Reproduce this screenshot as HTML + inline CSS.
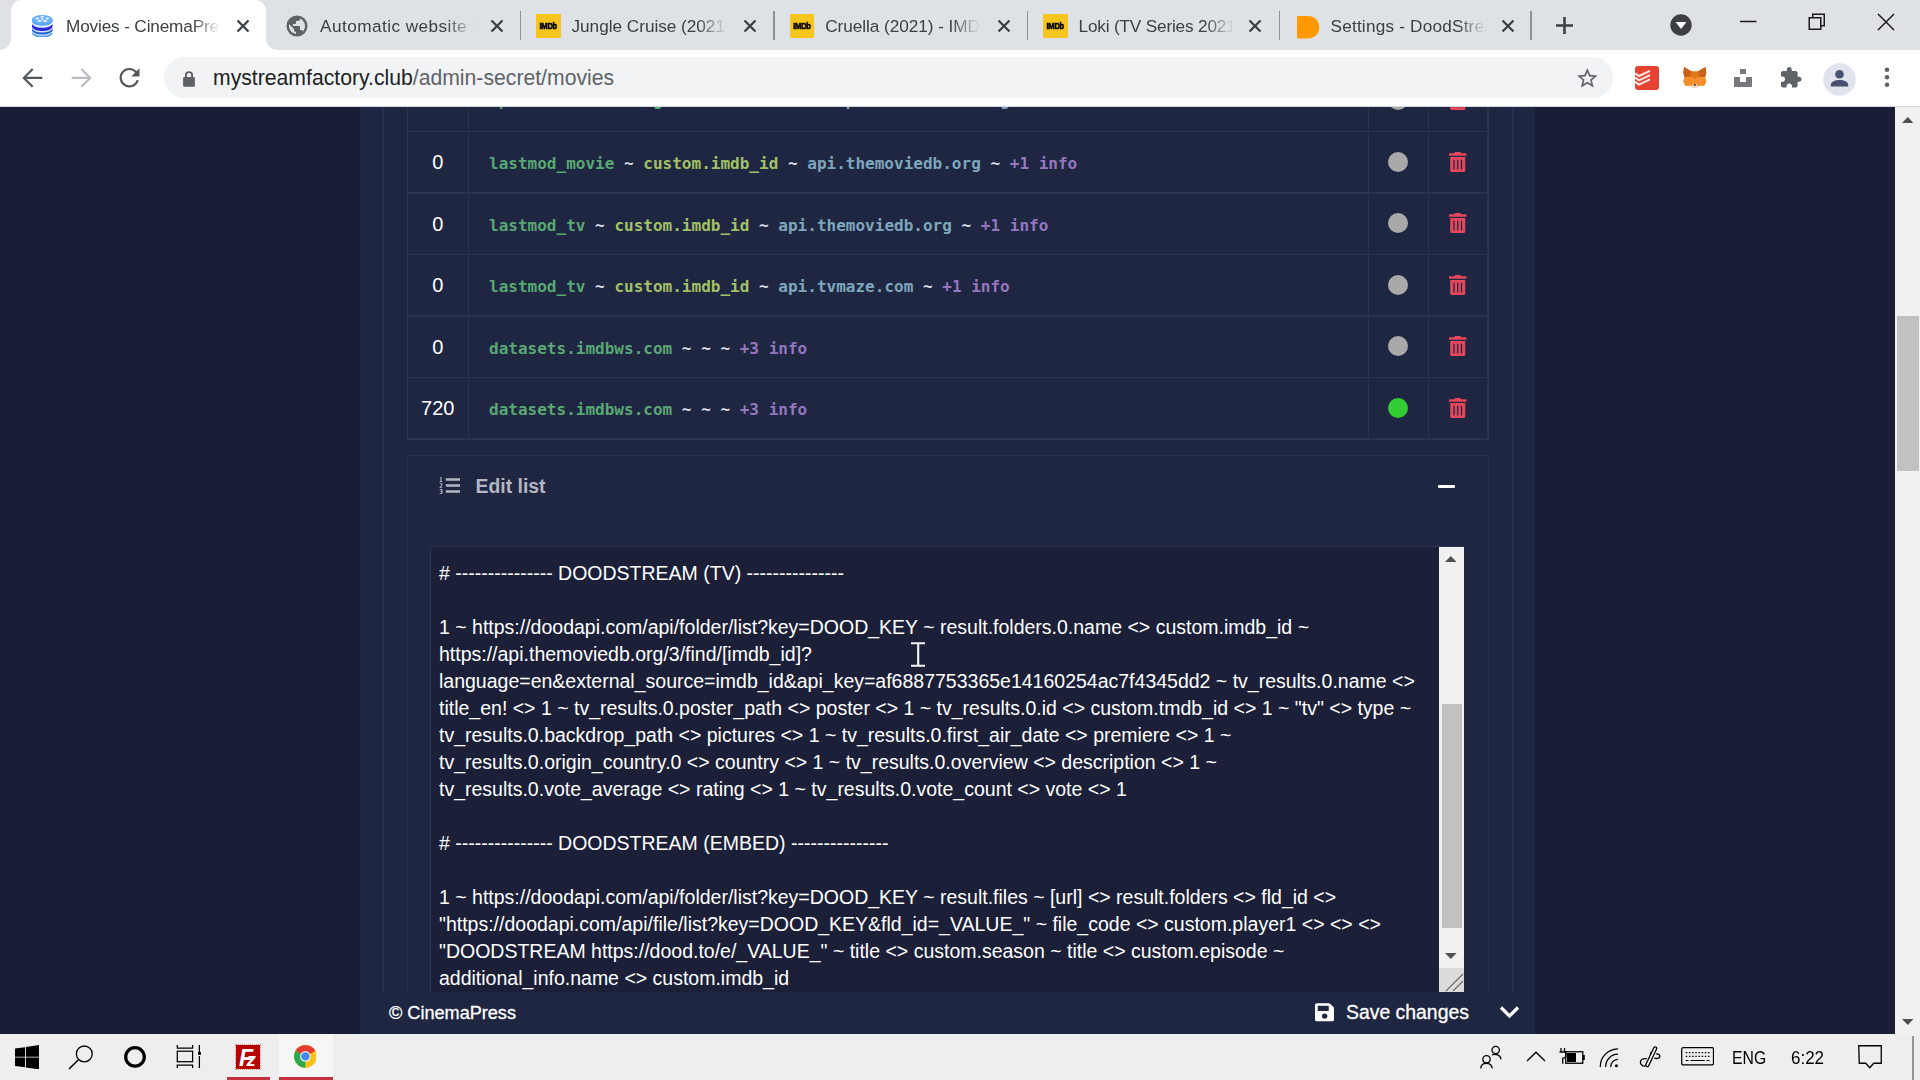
<!DOCTYPE html>
<html lang="en">
<head>
<meta charset="utf-8">
<title>Movies - CinemaPress</title>
<style>
*{box-sizing:border-box;margin:0;padding:0}
html,body{width:1920px;height:1080px;overflow:hidden;background:#1a1d36;font-family:"Liberation Sans",sans-serif}
.abs{position:absolute}
#tabstrip{position:absolute;left:0;top:0;width:1920px;height:50px;background:#dee1e6}
#toolbar{position:absolute;left:0;top:50px;width:1920px;height:56.5px;background:#fff;border-bottom:1.5px solid #d4d8e0}
#page{position:absolute;left:0;top:106.5px;width:1895px;height:927.5px;background:#1a1d36;overflow:hidden}
#vscroll{position:absolute;left:1895px;top:106.5px;width:25px;height:927.5px;background:#f1f1f1}
#taskbar{position:absolute;left:0;top:1034px;width:1920px;height:46px;background:#eeeeee}
/* page content: coordinates inside #page are relative to page (y offset 106.5) */
#panel{position:absolute;left:360px;top:0;width:1175px;height:928px;background:#1f2641}
.vl{position:absolute;top:0;width:1.5px;height:928px;background:#283050}
.hl{position:absolute;height:1.5px;background:#2b3353}

#tbl{position:absolute;left:406.5px;top:0;width:1082px;height:333px}
.tv{position:absolute;top:0;width:1.5px;height:333px;background:#2b3353}
.row{position:absolute;left:0;width:1082px;height:61.5px}
.row .num{position:absolute;left:1.5px;top:1.5px;width:59.5px;height:60px;line-height:60px;text-align:center;color:#fff;font-size:20px}
.row code{position:absolute;left:82.5px;top:2.5px;height:60px;line-height:61px;font-family:"DejaVu Sans Mono","Liberation Mono",monospace;font-size:16.02px;font-weight:bold;color:#dcdfe6;white-space:pre}
.row code b{font-weight:bold}
.g{color:#59a873}.y{color:#a2c166}.b{color:#7ea6bc}.p{color:#9476bf}
.dot{position:absolute;left:981.5px;top:21px;width:20px;height:20px;border-radius:50%;background:#a9a9a9}
.dot.on{background:#32cd32}
#card{position:absolute;left:406.5px;top:348px;width:1082px;height:700px;border:1.5px solid #293150;background:#1f2641}
#cardhead{position:absolute;left:68px;top:16px;font-size:19.4px;font-weight:bold;color:#b4b7c1;line-height:28px}
#minus{position:absolute;left:1030px;top:29px;width:17px;height:3.5px;background:#fff;border-radius:1px}
#ta{position:absolute;left:22.5px;top:90px;width:1034px;height:446px;background:#1c1f38;border-top:1.5px solid #2c3352;border-left:1.5px solid #2c3352;overflow:hidden}
#tatext{position:absolute;left:8px;top:13.5px;font-size:19.5px;line-height:27px;color:#fff;white-space:nowrap}
#tasb{position:absolute;left:1007.5px;top:0;width:25px;height:421px;background:#f1f1f1}
#tathumb{position:absolute;left:3px;top:157px;width:20px;height:224px;background:#c1c1c1}
#tacorner{position:absolute;left:1007.5px;top:421px;width:25px;height:24px;background:#dcdcdc}
#footer{position:absolute;left:360px;top:885px;width:1175px;height:43px;background:#1f2641;color:#fff}
#copy{position:absolute;left:29px;top:10px;font-size:18.1px;line-height:22px;-webkit-text-stroke:.3px #fff}
#save{position:absolute;left:986px;top:8.7px;font-size:19.4px;line-height:24px;-webkit-text-stroke:.3px #fff}

.atab{position:absolute;top:0;width:255.5px;height:50px;background:#fff;border-radius:11px 11px 0 0;margin-left:-4px}
.atab .fl,.atab .fr{position:absolute;bottom:0;width:11px;height:11px;background:radial-gradient(circle at 0 0,#dee1e6 10.5px,#fff 11px)}
.atab .fl{left:-11px}
.atab .fr{right:-11px;background:radial-gradient(circle at 100% 0,#dee1e6 10.5px,#fff 11px)}
.fav{position:absolute;top:13.500px;width:24px;height:24px}
.ttl{position:absolute;top:12.7px;margin-left:-1px;width:163px;height:28px;line-height:27px;font-size:17.200px;color:#3c4043;white-space:nowrap;overflow:hidden;-webkit-mask-image:linear-gradient(to right,#000 126px,transparent 155px);mask-image:linear-gradient(to right,#000 126px,transparent 155px)}
.tx{position:absolute;top:18.500px;width:14px;height:14px}
.tsep{position:absolute;top:11px;width:1.5px;height:29px;background:#8d9299}
.imdb{width:24.5px;height:24.5px;background:#f6c61f;border-radius:1px;position:relative}
.imdb span{position:absolute;left:0;top:0;width:24.500px;line-height:25px;text-align:center;font-size:7.6px;font-weight:bold;color:#000;letter-spacing:-0.3px;transform:scaleY(1.12);-webkit-text-stroke:.5px #000}
#omni{position:absolute;left:163.5px;top:7px;width:1449px;height:41px;border-radius:20.5px;background:#f1f3f4}
#url{position:absolute;left:213px;top:14px;font-size:21.200px;line-height:28px;white-space:nowrap}

.fz{color:#fff;font-weight:bold;font-style:italic;line-height:28px}
.tt{top:12px;font-size:17.500px;line-height:24px;color:#000}

.trash{position:absolute;left:1042.500px;top:21px;width:17.500px;height:20px}
#listic{position:absolute;left:31.500px;top:21px;width:23px;height:18px}
</style>
</head>
<body>
<div id="tabstrip"><div class="atab" style="left:14.5px"><i class="fl"></i><i class="fr"></i></div><div class="fav" style="left:30.5px"><svg width="20.5" height="22.5" viewBox="0 0 20.5 22.5" style="position:absolute;left:1.5px;top:1.3px"><g><ellipse cx="10.25" cy="18.3" rx="10.25" ry="4.2" fill="#4a9af0"/><ellipse cx="10.25" cy="16.500" rx="10.25" ry="4.200" fill="#d6e6fb"/><ellipse cx="10.25" cy="15.300" rx="10.25" ry="4.200" fill="#1c5fd0"/><rect x="0" y="13.800" width="20.5" height="1.500" fill="#1c5fd0"/><ellipse cx="10.25" cy="13.200" rx="10.25" ry="4.200" fill="#d6e6fb"/><ellipse cx="10.25" cy="11.800" rx="10.25" ry="4.200" fill="#2b28d8"/><rect x="0" y="9.300" width="20.5" height="2.500" fill="#2b28d8"/><ellipse cx="10.25" cy="8.600" rx="10.25" ry="4.200" fill="#e6f0fd"/><ellipse cx="10.25" cy="6.500" rx="10.25" ry="4.200" fill="#58a6f6"/><rect x="0" y="4.200" width="20.5" height="2.300" fill="#58a6f6"/><ellipse cx="10.25" cy="4.200" rx="10.25" ry="4.200" fill="#6db2f8"/><ellipse cx="10.25" cy="4.200" rx="1.300" ry=".7" fill="#fff"/><ellipse cx="5.300" cy="3.400" rx="1.900" ry="1" fill="#eaf3fe"/><ellipse cx="15.200" cy="3.400" rx="1.900" ry="1" fill="#eaf3fe"/><ellipse cx="7.500" cy="6" rx="1.900" ry="1" fill="#eaf3fe"/><ellipse cx="13" cy="6" rx="1.900" ry="1" fill="#eaf3fe"/><ellipse cx="10.25" cy="1.800" rx="1.900" ry=".9" fill="#eaf3fe"/></g></svg></div><div class="ttl" style="left:67.0px;letter-spacing:-0.15px">Movies - CinemaPress</div><svg class="tx" style="left:236px" viewBox="0 0 14 14"><path d="M1.5 1.5L12.5 12.5M12.5 1.5L1.5 12.5" stroke="#3c4043" stroke-width="2.3" fill="none"/></svg><div class="fav" style="left:284.5px"><svg width="24" height="24" viewBox="0 0 24 24"><circle cx="12" cy="12" r="10.5" fill="#5f6368"/><path d="M11 19.93c-3.95-.49-7-3.85-7-7.93 0-.62.08-1.21.21-1.79L9 15v1c0 1.1.9 2 2 2v1.93zm6.9-2.54c-.26-.81-1-1.39-1.9-1.39h-1v-3c0-.55-.45-1-1-1H8v-2h2c.55 0 1-.45 1-1V7h2c1.1 0 2-.9 2-2v-.41c2.93 1.19 5 4.06 5 7.41 0 2.08-.8 3.97-2.1 5.39z" fill="#dee1e6"/></svg></div><div class="ttl" style="left:321.0px;letter-spacing:0.45px">Automatic website for movies</div><svg class="tx" style="left:489.5px" viewBox="0 0 14 14"><path d="M1.5 1.5L12.5 12.5M12.5 1.5L1.5 12.5" stroke="#3c4043" stroke-width="2.3" fill="none"/></svg><i class="tsep" style="left:519.5px"></i><div class="fav" style="left:536px"><div class="imdb"><span>IMDb</span></div></div><div class="ttl" style="left:572.5px;letter-spacing:-0.02px">Jungle Cruise (2021) - IMDb</div><svg class="tx" style="left:743px" viewBox="0 0 14 14"><path d="M1.5 1.5L12.5 12.5M12.5 1.5L1.5 12.5" stroke="#3c4043" stroke-width="2.3" fill="none"/></svg><i class="tsep" style="left:773px"></i><div class="fav" style="left:789.75px"><div class="imdb"><span>IMDb</span></div></div><div class="ttl" style="left:826.25px;letter-spacing:-0.05px">Cruella (2021) - IMDb</div><svg class="tx" style="left:996.75px" viewBox="0 0 14 14"><path d="M1.5 1.5L12.5 12.5M12.5 1.5L1.5 12.5" stroke="#3c4043" stroke-width="2.3" fill="none"/></svg><i class="tsep" style="left:1026.500px"></i><div class="fav" style="left:1043px"><div class="imdb"><span>IMDb</span></div></div><div class="ttl" style="left:1079.5px;letter-spacing:-0.17px">Loki (TV Series 2021– ) - IMDb</div><svg class="tx" style="left:1248.25px" viewBox="0 0 14 14"><path d="M1.5 1.5L12.5 12.5M12.5 1.5L1.5 12.5" stroke="#3c4043" stroke-width="2.3" fill="none"/></svg><i class="tsep" style="left:1278.500px"></i><div class="fav" style="left:1295px"><svg width="23" height="23" viewBox="0 0 23 23" style="position:absolute;left:1.5px;top:2px"><path d="M.8 0h10.200c6.500 0 11.300 4.800 11.300 11.200s-4.800 11.200-11.300 11.200H.8c-.5 0-.8-.3-.8-.8V.8c0-.5.3-.8.8-.8z" fill="#ff9902"/></svg></div><div class="ttl" style="left:1331.5px;letter-spacing:0.2px">Settings - DoodStream</div><svg class="tx" style="left:1500.5px" viewBox="0 0 14 14"><path d="M1.5 1.5L12.5 12.5M12.5 1.5L1.5 12.5" stroke="#3c4043" stroke-width="2.3" fill="none"/></svg><i class="tsep" style="left:1530px"></i><svg class="abs" style="left:1555px;top:16px" width="19" height="19" viewBox="0 0 19 19"><path d="M9.5 1v17M1 9.500h17" stroke="#3c4043" stroke-width="2.6" fill="none"/></svg><svg class="abs" style="left:1670px;top:14px" width="22" height="22" viewBox="0 0 22 22"><circle cx="11" cy="11" r="10.700" fill="#3c4043"/><path d="M5.500 8h11l-5.500 7z" fill="#fff"/></svg><svg class="abs" style="left:1740px;top:20px" width="17" height="3" viewBox="0 0 17 3"><path d="M0 1.500h16.500" stroke="#1b1b1b" stroke-width="1.500"/></svg><svg class="abs" style="left:1808px;top:13px" width="18" height="18" viewBox="0 0 18 18"><path d="M1.250 4.750h11.500v11.500h-11.500z M4.750 4.750v-3.500h11.500v11.500h-3.500" stroke="#1b1b1b" stroke-width="1.500" fill="none"/></svg><svg class="abs" style="left:1877px;top:13px" width="18" height="18" viewBox="0 0 18 18"><path d="M1 1l16 16M17 1L1 17" stroke="#1b1b1b" stroke-width="1.500" fill="none"/></svg></div>
<div id="toolbar"><svg class="abs" style="left:20px;top:15px" width="26" height="26" viewBox="0 0 26 26"><path d="M22.300 12.900H4.500M12.700 4L3.800 12.900l8.900 8.900" stroke="#54575b" stroke-width="2.150" fill="none"/></svg><svg class="abs" style="left:68px;top:15px" width="26" height="26" viewBox="0 0 26 26"><path d="M3.700 12.900h17.800M13.300 4l8.900 8.900-8.900 8.900" stroke="#b9bcc0" stroke-width="2.150" fill="none"/></svg><svg class="abs" style="left:116px;top:15px" width="27" height="26" viewBox="0 0 27 26"><path d="M20.200 7.300A8.700 8.700 0 1 0 21.700 15.200" stroke="#54575b" stroke-width="2.200" fill="none"/><path d="M23.500 3.200v8.200h-8.200z" fill="#54575b"/></svg><div id="omni"></div><svg class="abs" style="left:182px;top:20.500px" width="14" height="16" viewBox="0 0 14 16"><path d="M3.900 6.500V4.200a3.100 3.100 0 0 1 6.200 0V6.500" stroke="#5f6368" stroke-width="1.900" fill="none"/><rect x="1.100" y="5.900" width="11.800" height="9.900" rx="1.300" fill="#5f6368"/></svg><div id="url"><span style="color:#202124">mystreamfactory.club</span><span style="color:#5f6368">/admin-secret/movies</span></div><svg class="abs" style="left:1575px;top:15.500px" width="24.600" height="24.600" viewBox="0 0 24 24"><path d="M22 9.240l-7.190-.62L12 2 9.190 8.630 2 9.240l5.460 4.730L5.820 21 12 17.270 18.180 21l-1.630-7.030L22 9.240zM12 15.400l-3.760 2.270 1-4.280-3.320-2.880 4.380-.38L12 6.100l1.710 4.040 4.380.38-3.320 2.880 1 4.280L12 15.400z" fill="#5f6368"/></svg><svg class="abs" style="left:1635px;top:16px" width="24" height="24" viewBox="0 0 24 24"><rect width="24" height="24" rx="3" fill="#e44332"/><path d="M0 7.200l4 2.800 11-5.200M0 11.500l4 2.800 11-5.200M0 15.800l4 2.800 11-5.200" stroke="#fbeae6" stroke-width="2" fill="none"/></svg><svg class="abs" style="left:1683px;top:17px" width="23.600" height="21.500" viewBox="0 0 24 22"><path d="M1 0l8 4.500h6L23 0l.8 6.500-1.300 4 1.200 4.500-2.200 4.200-5.500-.2-2 1.800h-4l-2-1.800-5.500.2L.3 15l1.200-4.500-1.300-4z" fill="#f5841f"/><path d="M1 0l8 4.500-1.200 5.500-6.300.5-1.300-4zM23 0l-8 4.500 1.200 5.500 6.300.5 1.300-4z" fill="#c7621d"/><path d="M9 4.500h6l1.200 5.500-4.200 2-4.200-2z" fill="#e2761b"/><path d="M7.800 10l4.200 2 4.200-2 6.300.5 1.200 4.500-2.200 4.200-5.500-.2-2 1.800h-4l-2-1.800-5.500.2L.3 15l1.200-4.500z" fill="#f6902e"/><path d="M10 17.500h4l.8 2.200-1.300 1.500h-3l-1.300-1.500z" fill="#e9ddd2"/><path d="M10.800 17.700h2.400l-.4 1.600h-1.600z" fill="#2a1a12"/></svg><svg class="abs" style="left:1734px;top:19px" width="18" height="18" viewBox="0 0 18 18"><rect x="6" y="0" width="6" height="5" fill="#77797d"/><path d="M0 8h6v5h6V8h6v10H0z" fill="#77797d"/></svg><svg class="abs" style="left:1778.500px;top:15.800px" width="23.500" height="23.500" viewBox="0 0 24 24"><path d="M20.500 11H19V7c0-1.100-.9-2-2-2h-4V3.500C13 2.120 11.880 1 10.500 1S8 2.120 8 3.500V5H4c-1.100 0-1.990.9-1.990 2v3.800H3.500c1.490 0 2.700 1.210 2.700 2.700s-1.210 2.700-2.700 2.700H2V20c0 1.100.9 2 2 2h3.800v-1.500c0-1.490 1.210-2.700 2.700-2.700 1.490 0 2.700 1.210 2.700 2.700V22H17c1.100 0 2-.9 2-2v-4h1.500c1.380 0 2.500-1.120 2.500-2.500S21.880 11 20.500 11z" fill="#5f6368"/></svg><svg class="abs" style="left:1823px;top:12.500px" width="33" height="33" viewBox="0 0 33 33"><circle cx="16.500" cy="16.500" r="16.300" fill="#e1e4ec"/><circle cx="16.500" cy="11.200" r="4.300" fill="#485270"/><path d="M7.800 23.600v-1.800c0-3 4.200-4.800 8.700-4.800s8.700 1.800 8.700 4.800v1.800z" fill="#485270"/></svg><svg class="abs" style="left:1884px;top:17.300px" width="6" height="22" viewBox="0 0 6 22"><circle cx="3" cy="2.700" r="2.300" fill="#5f6368"/><circle cx="3" cy="10.250" r="2.300" fill="#5f6368"/><circle cx="3" cy="17.800" r="2.300" fill="#5f6368"/></svg></div>
<div id="page">
  <div id="panel"></div>
  <div class="vl" style="left:382px"></div>
  <div class="vl" style="left:1512px"></div>
  <!-- table -->
  <div id="tbl">
    <div class="hl" style="left:0;top:24px;width:1082px"></div>
    <div class="hl" style="left:0;top:85.5px;width:1082px"></div>
    <div class="hl" style="left:0;top:147px;width:1082px"></div>
    <div class="hl" style="left:0;top:208.5px;width:1082px"></div>
    <div class="hl" style="left:0;top:270px;width:1082px"></div>
    <div class="hl" style="left:0;top:331.5px;width:1082px"></div>
    <div class="tv" style="left:0"></div>
    <div class="tv" style="left:61px"></div>
    <div class="tv" style="left:961px"></div>
    <div class="tv" style="left:1021px"></div>
    <div class="tv" style="left:1080.5px"></div>
    <div class="row" style="top:-37.5px"><span class="num"></span><code style="margin-top:-1.8px"><b class="g">api.themoviedb.org</b> ~ <b class="y">results.0.id</b> ~ <b class="b">api.themoviedb.org</b> ~ <b class="p">+1 info</b></code><i class="dot"></i><svg class="trash" viewBox="0 0 448 512"><path d="M32 464a48 48 0 0 0 48 48h288a48 48 0 0 0 48-48V128H32zm272-256a16 16 0 0 1 32 0v224a16 16 0 0 1-32 0zm-96 0a16 16 0 0 1 32 0v224a16 16 0 0 1-32 0zm-96 0a16 16 0 0 1 32 0v224a16 16 0 0 1-32 0zM432 32H312l-9.400-18.700A24 24 0 0 0 281.100 0H166.800a23.720 23.720 0 0 0-21.400 13.300L136 32H16A16 16 0 0 0 0 48v32a16 16 0 0 0 16 16h416a16 16 0 0 0 16-16V48a16 16 0 0 0-16-16z" fill="#e8475b"/></svg></div>
    <div class="row" style="top:24px"><span class="num">0</span><code><b class="g">lastmod_movie</b> ~ <b class="y">custom.imdb_id</b> ~ <b class="b">api.themoviedb.org</b> ~ <b class="p">+1 info</b></code><i class="dot"></i><svg class="trash" viewBox="0 0 448 512"><path d="M32 464a48 48 0 0 0 48 48h288a48 48 0 0 0 48-48V128H32zm272-256a16 16 0 0 1 32 0v224a16 16 0 0 1-32 0zm-96 0a16 16 0 0 1 32 0v224a16 16 0 0 1-32 0zm-96 0a16 16 0 0 1 32 0v224a16 16 0 0 1-32 0zM432 32H312l-9.400-18.700A24 24 0 0 0 281.100 0H166.800a23.720 23.720 0 0 0-21.400 13.300L136 32H16A16 16 0 0 0 0 48v32a16 16 0 0 0 16 16h416a16 16 0 0 0 16-16V48a16 16 0 0 0-16-16z" fill="#e8475b"/></svg></div>
    <div class="row" style="top:85.5px"><span class="num">0</span><code><b class="g">lastmod_tv</b> ~ <b class="y">custom.imdb_id</b> ~ <b class="b">api.themoviedb.org</b> ~ <b class="p">+1 info</b></code><i class="dot"></i><svg class="trash" viewBox="0 0 448 512"><path d="M32 464a48 48 0 0 0 48 48h288a48 48 0 0 0 48-48V128H32zm272-256a16 16 0 0 1 32 0v224a16 16 0 0 1-32 0zm-96 0a16 16 0 0 1 32 0v224a16 16 0 0 1-32 0zm-96 0a16 16 0 0 1 32 0v224a16 16 0 0 1-32 0zM432 32H312l-9.400-18.700A24 24 0 0 0 281.100 0H166.800a23.720 23.720 0 0 0-21.400 13.300L136 32H16A16 16 0 0 0 0 48v32a16 16 0 0 0 16 16h416a16 16 0 0 0 16-16V48a16 16 0 0 0-16-16z" fill="#e8475b"/></svg></div>
    <div class="row" style="top:147px"><span class="num">0</span><code><b class="g">lastmod_tv</b> ~ <b class="y">custom.imdb_id</b> ~ <b class="b">api.tvmaze.com</b> ~ <b class="p">+1 info</b></code><i class="dot"></i><svg class="trash" viewBox="0 0 448 512"><path d="M32 464a48 48 0 0 0 48 48h288a48 48 0 0 0 48-48V128H32zm272-256a16 16 0 0 1 32 0v224a16 16 0 0 1-32 0zm-96 0a16 16 0 0 1 32 0v224a16 16 0 0 1-32 0zm-96 0a16 16 0 0 1 32 0v224a16 16 0 0 1-32 0zM432 32H312l-9.400-18.700A24 24 0 0 0 281.100 0H166.800a23.720 23.720 0 0 0-21.400 13.300L136 32H16A16 16 0 0 0 0 48v32a16 16 0 0 0 16 16h416a16 16 0 0 0 16-16V48a16 16 0 0 0-16-16z" fill="#e8475b"/></svg></div>
    <div class="row" style="top:208.5px"><span class="num">0</span><code><b class="g">datasets.imdbws.com</b> ~ ~ ~ <b class="p">+3 info</b></code><i class="dot"></i><svg class="trash" viewBox="0 0 448 512"><path d="M32 464a48 48 0 0 0 48 48h288a48 48 0 0 0 48-48V128H32zm272-256a16 16 0 0 1 32 0v224a16 16 0 0 1-32 0zm-96 0a16 16 0 0 1 32 0v224a16 16 0 0 1-32 0zm-96 0a16 16 0 0 1 32 0v224a16 16 0 0 1-32 0zM432 32H312l-9.400-18.700A24 24 0 0 0 281.100 0H166.800a23.720 23.720 0 0 0-21.400 13.300L136 32H16A16 16 0 0 0 0 48v32a16 16 0 0 0 16 16h416a16 16 0 0 0 16-16V48a16 16 0 0 0-16-16z" fill="#e8475b"/></svg></div>
    <div class="row" style="top:270px"><span class="num">720</span><code><b class="g">datasets.imdbws.com</b> ~ ~ ~ <b class="p">+3 info</b></code><i class="dot on"></i><svg class="trash" viewBox="0 0 448 512"><path d="M32 464a48 48 0 0 0 48 48h288a48 48 0 0 0 48-48V128H32zm272-256a16 16 0 0 1 32 0v224a16 16 0 0 1-32 0zm-96 0a16 16 0 0 1 32 0v224a16 16 0 0 1-32 0zm-96 0a16 16 0 0 1 32 0v224a16 16 0 0 1-32 0zM432 32H312l-9.400-18.700A24 24 0 0 0 281.100 0H166.800a23.720 23.720 0 0 0-21.400 13.300L136 32H16A16 16 0 0 0 0 48v32a16 16 0 0 0 16 16h416a16 16 0 0 0 16-16V48a16 16 0 0 0-16-16z" fill="#e8475b"/></svg></div>
  </div>
  <!-- edit list card -->
  <div id="card">
    <svg id="listic" viewBox="0 0 23 18"><path d="M6.800 2.500h14.200M6.800 8.500h14.200M6.800 14.600h14.200" stroke="#b4b7c1" stroke-width="2.500" fill="none"/><path d="M2 .3v4M1 1.200L2 .3M.7 4.500h2.600M.7 6.700h2.200v1.500L.7 10.300h2.600M.7 12.500h2.400v1.900H1.500M3.100 14.400v2H.7" stroke="#b4b7c1" stroke-width="1" fill="none"/></svg><div id="cardhead">Edit list</div>
    <div id="minus"></div>
    <div id="ta">
      <div id="tatext"># --------------- DOODSTREAM (TV) ---------------<br><br>1 ~ https://doodapi.com/api/folder/list?key=DOOD_KEY ~ result.folders.0.name &lt;&gt; custom.imdb_id ~<br>https://api.themoviedb.org/3/find/[imdb_id]?<br>language=en&amp;external_source=imdb_id&amp;api_key=af6887753365e14160254ac7f4345dd2 ~ tv_results.0.name &lt;&gt;<br>title_en! &lt;&gt; 1 ~ tv_results.0.poster_path &lt;&gt; poster &lt;&gt; 1 ~ tv_results.0.id &lt;&gt; custom.tmdb_id &lt;&gt; 1 ~ "tv" &lt;&gt; type ~<br>tv_results.0.backdrop_path &lt;&gt; pictures &lt;&gt; 1 ~ tv_results.0.first_air_date &lt;&gt; premiere &lt;&gt; 1 ~<br>tv_results.0.origin_country.0 &lt;&gt; country &lt;&gt; 1 ~ tv_results.0.overview &lt;&gt; description &lt;&gt; 1 ~<br>tv_results.0.vote_average &lt;&gt; rating &lt;&gt; 1 ~ tv_results.0.vote_count &lt;&gt; vote &lt;&gt; 1<br><br># --------------- DOODSTREAM (EMBED) ---------------<br><br>1 ~ https://doodapi.com/api/folder/list?key=DOOD_KEY ~ result.files ~ [url] &lt;&gt; result.folders &lt;&gt; fld_id &lt;&gt;<br>"https://doodapi.com/api/file/list?key=DOOD_KEY&amp;fld_id=_VALUE_" ~ file_code &lt;&gt; custom.player1 &lt;&gt; &lt;&gt; &lt;&gt;<br>"DOODSTREAM https://dood.to/e/_VALUE_" ~ title &lt;&gt; custom.season ~ title &lt;&gt; custom.episode ~<br>additional_info.name &lt;&gt; custom.imdb_id</div>
      <div id="tasb"><div id="tathumb"></div><svg class="abs" style="left:6.700px;top:9.800px" width="11.600" height="6" viewBox="0 0 13 7" preserveAspectRatio="none"><path d="M0 7L6.500 0 13 7z" fill="#505050"/></svg><svg class="abs" style="left:6.700px;top:406px" width="11.600" height="6" viewBox="0 0 13 7" preserveAspectRatio="none"><path d="M0 0L6.500 7 13 0z" fill="#505050"/></svg></div>
      <div id="tacorner"><svg width="25.500" height="24" viewBox="0 0 25.500 24"><path d="M24 6L7 23M24 13L14 23" stroke="#6e6e6e" stroke-width="1.200"/></svg></div>
    </div>
  </div>
  <div id="footer"><span id="copy">© CinemaPress</span><svg class="abs" style="left:954.500px;top:10.400px" width="19.300" height="20.600" viewBox="0 0 448 512" preserveAspectRatio="none"><path d="M433.941 129.941l-83.882-83.882A48 48 0 0 0 316.118 32H48C21.490 32 0 53.490 0 80v352c0 26.510 21.490 48 48 48h352c26.510 0 48-21.490 48-48V163.882a48 48 0 0 0-14.059-33.941zM224 416c-35.346 0-64-28.654-64-64 0-35.346 28.654-64 64-64s64 28.654 64 64c0 35.346-28.654 64-64 64zm96-304.520V212c0 6.627-5.373 12-12 12H76c-6.627 0-12-5.373-12-12V108c0-6.627 5.373-12 12-12h228.520c3.183 0 6.235 1.264 8.485 3.515l3.480 3.480A11.996 11.996 0 0 1 320 111.480z" fill="#fff"/></svg><svg class="abs" style="left:1139px;top:13.200px" width="21" height="14" viewBox="0 0 21 14"><path d="M2 2.500l8.500 8.500L19 2.500" stroke="#fff" stroke-width="3.200" fill="none"/></svg><span id="save">Save changes</span></div>
</div>
<div id="vscroll"><div class="abs" style="left:2px;top:209.500px;width:21.500px;height:155px;background:#c1c1c1"></div><svg class="abs" style="left:6.600px;top:10px" width="11.600" height="6" viewBox="0 0 13 7" preserveAspectRatio="none"><path d="M0 7L6.500 0 13 7z" fill="#505050"/></svg><svg class="abs" style="left:6.600px;top:912.500px" width="11.600" height="6" viewBox="0 0 13 7" preserveAspectRatio="none"><path d="M0 0L6.500 7 13 0z" fill="#505050"/></svg></div>
<div id="taskbar">
<div class="abs" style="left:278.5px;top:0;width:54.5px;height:46px;background:#f6f6f6"></div>
<div class="abs" style="left:227px;top:43px;width:43px;height:3px;background:#c5303f"></div>
<div class="abs" style="left:278.5px;top:43px;width:54.5px;height:3px;background:#c5303f"></div>
<svg class="abs" style="left:15px;top:10.7px" width="24.2" height="24.4" viewBox="0 0 24.5 25" preserveAspectRatio="none"><path d="M0 3.600L10.200 2.200v9.800H0zM11.100 2L24.500 0v12H11.100zM0 12.900h10.200v9.900L0 21.400zM11.100 12.900h13.400V25L11.100 23z" fill="#000"/></svg>
<svg class="abs" style="left:68px;top:10.5px" width="26" height="26" viewBox="0 0 26 26"><circle cx="16.300" cy="8.900" r="7.900" stroke="#000" stroke-width="1.300" fill="none"/><path d="M10.700 14.500L1 24" stroke="#000" stroke-width="1.500"/></svg>
<svg class="abs" style="left:122px;top:10px" width="26" height="26" viewBox="0 0 26 26"><circle cx="13" cy="12.900" r="9.300" stroke="#000" stroke-width="3.200" fill="none"/></svg>
<svg class="abs" style="left:176px;top:10px" width="27" height="25" viewBox="0 0 27 25"><path d="M1.300 1v3h15.300v-3M1.300 24v-3h15.300v3" stroke="#000" stroke-width="1.250" fill="none"/><rect x="1.300" y="7.200" width="15.300" height="10.500" stroke="#000" stroke-width="1.250" fill="none"/><path d="M23.400 1v7.400M23.400 12v12" stroke="#000" stroke-width="1.250"/><rect x="22" y="8" width="2.900" height="2.900" fill="#000"/></svg>
<div class="abs" style="left:236.25px;top:11px;width:23.75px;height:23.75px;background:#b80000;outline:1px dotted rgba(190,40,40,.45)"></div>
<div class="abs fz" style="left:239px;top:9.5px;font-size:23px">F</div><div class="abs fz" style="left:246.5px;top:12px;font-size:18.5px">z</div>
<svg class="abs" style="left:293.5px;top:11.3px" width="22.8" height="22.8" viewBox="0 0 24 24"><circle cx="12" cy="12" r="12" fill="#fbc116"/><path d="M12 12L1.610 6A12 12 0 0 1 22.390 6z" fill="#e33b2e"/><path d="M12 12L1.610 6A12 12 0 0 0 12 24z" fill="#2da94f"/><path d="M12 12L22.390 6H12z" fill="#e33b2e"/><circle cx="12" cy="12" r="5.600" fill="#f1f1f1"/><circle cx="12" cy="12" r="4.400" fill="#4687f4"/></svg>
<svg class="abs" style="left:1480px;top:10.5px" width="23" height="24" viewBox="0 0 23 24"><circle cx="15.700" cy="5" r="3.700" stroke="#000" stroke-width="1.300" fill="none"/><circle cx="6.500" cy="14.300" r="3.700" stroke="#000" stroke-width="1.300" fill="none"/><path d="M.8 23.400c0-3.200 2.500-5 5.700-5s5.700 1.800 5.700 5M12 9.800c3.600-1.300 8.600.2 9 4.400" stroke="#000" stroke-width="1.300" fill="none"/></svg>
<svg class="abs" style="left:1526px;top:16.500px" width="20" height="11" viewBox="0 0 20 11"><path d="M1 10L10 1.200 19 10" stroke="#000" stroke-width="1.300" fill="none"/></svg>
<svg class="abs" style="left:1559px;top:14.200px" width="26" height="18" viewBox="0 0 26 18"><rect x="6.750" y="3.750" width="17" height="11.500" stroke="#000" stroke-width="1.300" fill="none"/><rect x="24" y="7" width="1.800" height="5" fill="#000"/><rect x="8" y="5" width="9" height="9" fill="#000"/><path d="M2 0v4M5.500 0v4M.5 4h6.500v3c0 2-1.300 3.200-3.250 3.200v5.500" stroke="#000" stroke-width="1.300" fill="none"/></svg>
<svg class="abs" style="left:1599px;top:13.5px" width="21" height="20" viewBox="0 0 21 20"><path d="M1.300 18.600A17.800 17.800 0 0 1 18.600 .8M6.700 18.600A12.400 12.400 0 0 1 18.600 6.200M11.800 18.600A7.300 7.300 0 0 1 18.600 11.300" stroke="#000" stroke-width="1.250" fill="none" stroke-linecap="round"/><circle cx="17.400" cy="17.800" r="1.500" fill="#000"/></svg>
<svg class="abs" style="left:1639px;top:12px" width="22" height="22" viewBox="0 0 22 22"><path d="M7.300 12.600C4 12.300 1.400 13.500 1.400 16s2 4.300 4.300 4.100M17.600 7.900c2.300 0 3.400 1.200 3.300 2.500-.1 1.600-2.200 2.600-5.200 1.800" stroke="#000" stroke-width="1.300" fill="none" stroke-linecap="round"/><path d="M16.200 2.400L8.300 19" stroke="#000" stroke-width="4.300" stroke-linecap="round"/><path d="M16.200 2.400L8.300 19" stroke="#eee" stroke-width="1.800" stroke-linecap="round"/><path d="M12.300 5.800l-1.300 2.700" stroke="#000" stroke-width="1.100"/></svg>
<svg class="abs" style="left:1680.800px;top:13.200px" width="33.200" height="18.600" viewBox="0 0 35 20" preserveAspectRatio="none"><rect x=".75" y=".75" width="33.500" height="18.500" rx="1.500" stroke="#000" stroke-width="1.300" fill="none"/><path d="M5 6h25M5 10h25" stroke="#000" stroke-width="1.300" stroke-dasharray="1.600 1.750"/><path d="M5 14.500h3M10 14.500h15M27 14.500h3" stroke="#000" stroke-width="1.300"/></svg>
<div class="abs tt" style="left:1732px;transform:scaleX(.9);transform-origin:0 0">ENG</div><div class="abs tt" style="left:1791px;transform:scaleX(.97);transform-origin:0 0">6:22</div>
<svg class="abs" style="left:1857px;top:10.5px" width="26" height="25" viewBox="0 0 26 25"><path d="M1.750 .75h22.500v17.500h-7.500l-4 4.500-4-4.500h-6.500z" stroke="#000" stroke-width="1.300" fill="none"/></svg>
<div class="abs" style="left:1912px;top:2px;width:1.5px;height:44px;background:#969696"></div>
</div>
<svg class="abs" style="left:911px;top:642px;z-index:50" width="14.200" height="25" viewBox="0 0 14.200 25"><path d="M0 1.200h14.200M0 23.800h14.200M7.200 1.200v22.600" stroke="#f4f4f8" stroke-width="2.100" fill="none"/></svg>
</body>
</html>
